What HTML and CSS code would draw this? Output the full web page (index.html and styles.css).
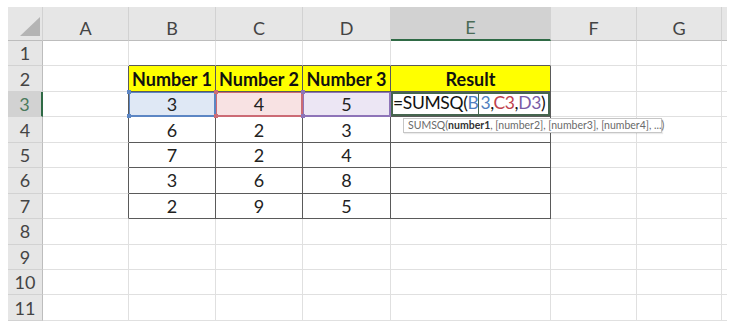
FILE: index.html
```html
<!DOCTYPE html>
<html>
<head>
<meta charset="utf-8">
<link rel="stylesheet" href="styles.css">
</head>
<body>
<div class="sheet">
  <div class="ch corner"><span class="tri"></span></div>
  <div class="ch">A</div><div class="ch">B</div><div class="ch">C</div><div class="ch">D</div>
  <div class="ch ch-sel">E</div><div class="ch">F</div><div class="ch">G</div><div class="ch edge"></div>

  <div class="rh">1</div>
  <div class="c"></div><div class="c tb-top"></div><div class="c tb-top"></div><div class="c tb-top"></div><div class="c tb-top"></div><div class="c"></div><div class="c"></div><div class="c edge"></div>

  <div class="rh">2</div>
  <div class="c tb-left"></div>
  <div class="c t hd">Number 1</div><div class="c t hd">Number 2</div><div class="c t hd">Number 3</div><div class="c t hd">Result</div>
  <div class="c"></div><div class="c"></div><div class="c edge"></div>

  <div class="rh rh-sel">3</div>
  <div class="c tb-left"></div>
  <div class="c t ref ref-b">3</div><div class="c t ref ref-c">4</div><div class="c t ref ref-d">5</div>
  <div class="c t active"><span class="fx">=SUMSQ(<span class="k-b">B<span class="caret"></span>3</span>,<span class="k-c">C3</span>,<span class="k-d">D3</span>)</span>
    <div class="tip">SUMSQ(<b>number1</b>, [number2], [number3], [number4], ...)</div>
  </div>
  <div class="c"></div><div class="c"></div><div class="c edge"></div>

  <div class="rh">4</div>
  <div class="c tb-left"></div>
  <div class="c t">6</div><div class="c t">2</div><div class="c t">3</div><div class="c t"></div>
  <div class="c"></div><div class="c"></div><div class="c edge"></div>

  <div class="rh">5</div>
  <div class="c tb-left"></div>
  <div class="c t">7</div><div class="c t">2</div><div class="c t">4</div><div class="c t"></div>
  <div class="c"></div><div class="c"></div><div class="c edge"></div>

  <div class="rh">6</div>
  <div class="c tb-left"></div>
  <div class="c t">3</div><div class="c t">6</div><div class="c t">8</div><div class="c t"></div>
  <div class="c"></div><div class="c"></div><div class="c edge"></div>

  <div class="rh">7</div>
  <div class="c tb-left"></div>
  <div class="c t">2</div><div class="c t">9</div><div class="c t">5</div><div class="c t"></div>
  <div class="c"></div><div class="c"></div><div class="c edge"></div>

  <div class="rh">8</div>
  <div class="c"></div><div class="c"></div><div class="c"></div><div class="c"></div><div class="c"></div><div class="c"></div><div class="c"></div><div class="c edge"></div>

  <div class="rh">9</div>
  <div class="c"></div><div class="c"></div><div class="c"></div><div class="c"></div><div class="c"></div><div class="c"></div><div class="c"></div><div class="c edge"></div>

  <div class="rh">10</div>
  <div class="c"></div><div class="c"></div><div class="c"></div><div class="c"></div><div class="c"></div><div class="c"></div><div class="c"></div><div class="c edge"></div>

  <div class="rh">11</div>
  <div class="c"></div><div class="c"></div><div class="c"></div><div class="c"></div><div class="c"></div><div class="c"></div><div class="c"></div><div class="c edge"></div>
</div>
</body>
</html>
```

FILE: styles.css
```css
* { box-sizing: border-box; }
html, body { margin: 0; padding: 0; background: #fff; }
body {
  width: 750px;
  height: 325px;
  overflow: hidden;
  font-family: Lato, "Open Sans", "Liberation Sans", sans-serif;
}
.sheet {
  display: grid;
  grid-template-columns: 35px 86px 87px 87px 88px 160px 86px 85px 5px;
  grid-template-rows: 34px repeat(11, 25.45px);
  margin: 7px 0 0 8px;
  width: 719px;
}
.ch {
  background: #e6e6e6;
  border-right: 1px solid #d2d2d2;
  border-bottom: 1px solid #bdbdbd;
  display: flex;
  align-items: flex-end;
  justify-content: center;
  color: #444;
  font-size: 18px;
  line-height: 22px;
  padding-bottom: 1px;
}
.ch.edge { border-right: none; }
.ch-sel {
  background: #d2d2d2;
  color: #4b6b57;
  border-bottom: 2px solid #2f6a45;
}
.corner { position: relative; }
.tri {
  position: absolute;
  right: 2px;
  bottom: 4px;
  width: 0;
  height: 0;
  border-left: 20px solid transparent;
  border-bottom: 19px solid #b4b4b4;
}
.rh {
  background: #e6e6e6;
  border-right: 1px solid #bdbdbd;
  border-bottom: 1px solid #d2d2d2;
  display: flex;
  align-items: center;
  justify-content: center;
  color: #444;
  font-size: 18px;
}
.rh-sel {
  background: #d2d2d2;
  color: #4b7a5c;
  border-right: 2px solid #2f6a45;
}
.c {
  border-right: 1px solid #e0e0e0;
  border-bottom: 1px solid #e0e0e0;
  display: flex;
  align-items: center;
  justify-content: center;
  font-size: 18px;
  color: #222;
}
.c.edge { border-right: none; }
.tb-top { border-bottom-color: #5a5a5a; }
.tb-left { border-right-color: #5a5a5a; }
.t {
  border-right-color: #5a5a5a;
  border-bottom-color: #5a5a5a;
}
.hd {
  background: #ffff00;
  font-weight: 700;
  color: #111;
}
.ref { position: relative; }
.ref-b { background: #dfe8f5; box-shadow: inset 0 0 0 1px #5c86c4; border-color: #5c86c4; }
.ref-c { background: #f8e2e3; box-shadow: inset 0 0 0 1px #cc6b75; border-color: #cc6b75; }
.ref-d { background: #ece6f4; box-shadow: inset 0 0 0 1px #8e74b8; border-color: #8e74b8; }
.ref::before, .ref::after {
  content: "";
  position: absolute;
  left: -2px;
  width: 4px;
  height: 4px;
}
.ref::before { top: -2px; }
.ref::after { bottom: -2px; }
.ref-b::before, .ref-b::after { background: #5c86c4; }
.ref-c::before, .ref-c::after { background: #cc6b75; }
.ref-d::before, .ref-d::after { background: #8e74b8; }
.active {
  position: relative;
  justify-content: flex-start;
  padding-left: 2px;
  box-shadow: inset 0 0 0 2px #46654f;
  font-size: 17.5px;
  color: #111;
}
.fx { white-space: nowrap; letter-spacing: -0.35px; }
.k-b { color: #4f7fc0; }
.k-c { color: #c0414d; }
.k-d { color: #7a5ca6; }
.caret {
  display: inline-block;
  width: 1px;
  height: 25px;
  background: #46654f;
  vertical-align: middle;
  margin: 0 1px 0 0;
}
.tip {
  position: absolute;
  left: 12px;
  top: 26px;
  width: 259px;
  height: 15px;
  background: #fff;
  border: 1px solid #c6c6c6;
  box-shadow: 1px 1px 1px rgba(0,0,0,0.08);
  font-size: 10.5px;
  line-height: 13px;
  color: #6a6a6a;
  padding-left: 4px;
  white-space: nowrap;
  z-index: 2;
}
.tip b { color: #333; font-weight: 700; }
```
